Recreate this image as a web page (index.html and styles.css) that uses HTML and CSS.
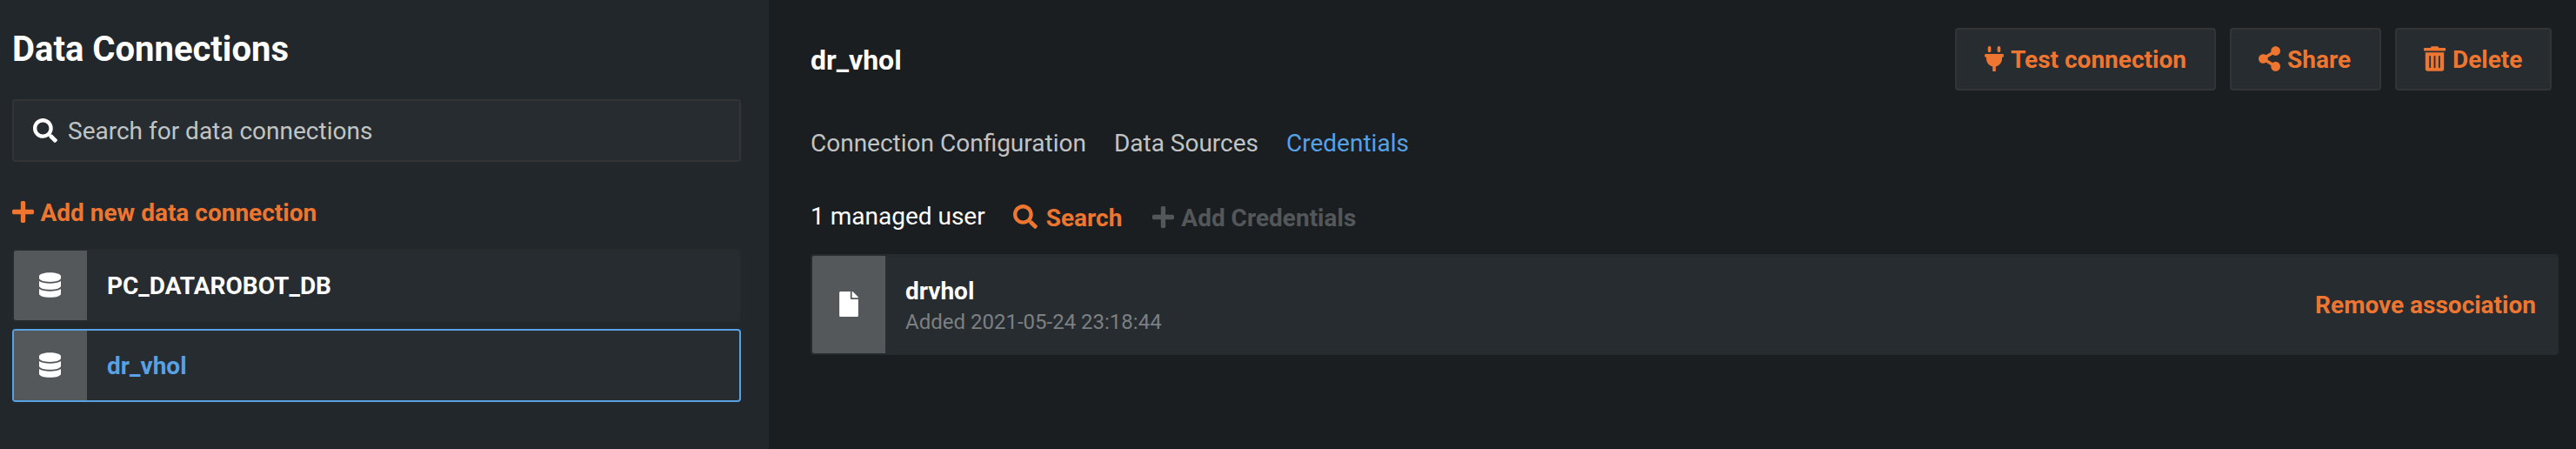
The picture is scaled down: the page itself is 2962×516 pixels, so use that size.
FILE: index.html
```html
<!DOCTYPE html>
<html lang="en">
<head>
<meta charset="utf-8">
<title>Data Connections</title>
<link rel="stylesheet" href="styles.css">
</head>
<body>
<svg class="sprite" aria-hidden="true">
  <symbol id="search" viewBox="0 0 512 512"><path d="M505 442.700 405.300 343c-4.500-4.500-10.600-7-17-7H372c27.600-35.300 44-79.700 44-128C416 93.100 322.900 0 208 0S0 93.100 0 208s93.100 208 208 208c48.300 0 92.700-16.400 128-44v16.300c0 6.400 2.500 12.500 7 17l99.700 99.700c9.400 9.400 24.600 9.400 33.900 0l28.300-28.300c9.400-9.400 9.400-24.600.1-34zM208 336c-70.700 0-128-57.200-128-128 0-70.700 57.200-128 128-128 70.700 0 128 57.200 128 128 0 70.700-57.200 128-128 128z"/></symbol>
  <symbol id="plus" viewBox="0 0 448 448"><path d="M416 176H272V32c0-17.700-14.300-32-32-32h-32c-17.700 0-32 14.300-32 32v144H32c-17.700 0-32 14.300-32 32v32c0 17.700 14.300 32 32 32h144v144c0 17.700 14.300 32 32 32h32c17.700 0 32-14.300 32-32V272h144c17.700 0 32-14.300 32-32v-32c0-17.700-14.300-32-32-32z"/></symbol>
  <symbol id="database" viewBox="0 0 448 512"><path d="M448 73.100v45.800C448 159.100 347.700 192 224 192S0 159.100 0 118.900V73.100C0 32.900 100.300 0 224 0s224 32.900 224 73.100zM448 176v102.900C448 319.100 347.700 352 224 352S0 319.100 0 278.900V176c48.100 33.100 136.200 48.600 224 48.600S399.900 209.100 448 176zm0 160v102.900C448 479.100 347.700 512 224 512S0 479.100 0 438.900V336c48.100 33.100 136.200 48.600 224 48.600S399.900 369.100 448 336z"/></symbol>
  <symbol id="file" viewBox="0 0 384 512"><path d="M224 136V0H24C10.700 0 0 10.700 0 24v464c0 13.300 10.700 24 24 24h336c13.300 0 24-10.700 24-24V160H248c-13.200 0-24-10.800-24-24zm160-14.100v6.100H256V0h6.100c6.400 0 12.500 2.500 17 7l97.900 98c4.500 4.500 7 10.600 7 16.900z"/></symbol>
  <symbol id="plug" viewBox="0 0 384 512"><path d="M320 32a32 32 0 0 0-64 0v64a32 32 0 0 0 64 0zM368 160H16c-8.800 0-16 7.200-16 16v32c0 8.800 7.200 16 16 16h16v32c0 77.400 55 142 128 156.800V512h64v-99.200C297 398 352 333.400 352 256v-32h16c8.800 0 16-7.200 16-16v-32c0-8.800-7.200-16-16-16zM128 32a32 32 0 0 0-64 0v64a32 32 0 0 0 64 0z"/></symbol>
  <symbol id="share" viewBox="0 0 448 512"><path d="M352 320c-22.600 0-43.400 7.800-59.800 20.900l-102.500-64.100a96.600 96.600 0 0 0 0-41.700l102.500-64.100C308.600 184.200 329.400 192 352 192c53 0 96-43 96-96S405 0 352 0s-96 43-96 96c0 7.200.8 14.100 2.300 20.900l-102.500 64.100C139.400 167.800 118.600 160 96 160c-53 0-96 43-96 96s43 96 96 96c22.600 0 43.400-7.800 59.800-20.900l102.500 64.100A96.300 96.300 0 0 0 256 416c0 53 43 96 96 96s96-43 96-96-43-96-96-96z"/></symbol>
  <symbol id="trash" viewBox="0 0 448 512"><path fill-rule="evenodd" d="M432 32H312l-9.400-18.700A24 24 0 0 0 281.100 0H166.800a23.700 23.700 0 0 0-21.400 13.300L136 32H16A16 16 0 0 0 0 48v32a16 16 0 0 0 16 16h416a16 16 0 0 0 16-16V48a16 16 0 0 0-16-16zM32 128v336a48 48 0 0 0 48 48h288a48 48 0 0 0 48-48V128zm80 80a16 16 0 0 1 32 0v224a16 16 0 0 1-32 0zm96 0a16 16 0 0 1 32 0v224a16 16 0 0 1-32 0zm96 0a16 16 0 0 1 32 0v224a16 16 0 0 1-32 0z"/></symbol>
</svg>
<div class="app">
  <aside class="sidebar">
    <h1 class="sidebar-title">Data Connections</h1>
    <div class="search-box">
      <svg class="icon icon-search"><use href="#search"/></svg>
      <span>Search for data connections</span>
    </div>
    <a class="action add-connection"><svg class="icon icon-plus"><use href="#plus"/></svg><span>Add new data connection</span></a>
    <div class="connections">
      <div class="connection">
        <div class="tile"><svg class="icon icon-database"><use href="#database"/></svg></div>
        <span class="connection-name">PC_DATAROBOT_DB</span>
      </div>
      <div class="connection selected">
        <div class="tile"><svg class="icon icon-database"><use href="#database"/></svg></div>
        <span class="connection-name">dr_vhol</span>
      </div>
    </div>
  </aside>
  <main class="detail">
    <header class="detail-header">
      <h2 class="detail-title">dr_vhol</h2>
      <div class="buttons">
        <button class="button test"><svg class="icon icon-plug"><use href="#plug"/></svg><span>Test connection</span></button>
        <button class="button share"><svg class="icon icon-share"><use href="#share"/></svg><span>Share</span></button>
        <button class="button delete"><svg class="icon icon-trash"><use href="#trash"/></svg><span>Delete</span></button>
      </div>
    </header>
    <nav class="tabs">
      <a class="tab">Connection Configuration</a>
      <a class="tab">Data Sources</a>
      <a class="tab active">Credentials</a>
    </nav>
    <div class="toolbar">
      <span class="user-count">1 managed user</span>
      <a class="action toolbar-search"><svg class="icon icon-search"><use href="#search"/></svg><span>Search</span></a>
      <a class="action disabled"><svg class="icon icon-plus"><use href="#plus"/></svg><span>Add Credentials</span></a>
    </div>
    <div class="credential">
      <div class="tile"><svg class="icon icon-file"><use href="#file"/></svg></div>
      <div class="credential-info">
        <div class="credential-name">drvhol</div>
        <div class="credential-date">Added 2021-05-24 23:18:44</div>
      </div>
      <a class="action remove">Remove association</a>
    </div>
  </main>
</div>
</body>
</html>
```

FILE: styles.css
```css
* { box-sizing: border-box; }

body {
  margin: 0;
  background: #1a1e20;
  color: #fff;
  font: 28px/32px Roboto, sans-serif;
}

.sprite { display: none; }
.icon { display: block; flex: none; fill: currentColor; }
.icon-search { width: 28px; height: 28px; }
.icon-plus { width: 25px; height: 25px; margin-bottom: 1px; }
.icon-database { width: 25px; height: 29px; margin: 0 1px 1px 0; }
.icon-file { width: 22px; height: 29px; margin-bottom: 1px; }
.icon-plug { width: 22px; height: 29px; margin-bottom: 1px; }
.icon-share { width: 25px; height: 29px; margin-bottom: 1px; }
.icon-trash { width: 25px; height: 29px; margin-bottom: 1px; }

.app { display: flex; height: 516px; overflow: hidden; }

.sidebar {
  flex: none;
  width: 884px;
  padding: 33px 32px 0 14px;
  background: #22272b;
}

.sidebar-title { margin: 0; font-size: 40px; line-height: 48px; font-weight: 700; }

.search-box {
  display: flex;
  align-items: center;
  height: 72px;
  margin-top: 33px;
  padding: 0 22px;
  border: 2px solid #323436;
  border-radius: 4px;
  background: #272c30;
}
.search-box span { margin-left: 12px; padding-top: 2px; color: #c1c4c5; }

.action {
  display: flex;
  align-items: center;
  color: #ee7630;
  font-weight: 700;
}
.action.disabled { color: #53575a; }
.action span { margin-left: 8px; padding-top: 2px; }

.add-connection { margin-top: 41px; }
.add-connection span { margin-left: 7.5px; }

.connections { display: grid; gap: 8px; margin-top: 25px; }
.connection {
  display: flex;
  height: 84px;
  align-items: center;
  border: 2px solid #262b2e;
  border-radius: 4px;
  background: #272c30;
}
.connection.selected { border-color: #57a1e4; color: #57a1e4; }
.connection-name { margin-left: 23px; padding-top: 2px; font-weight: 700; }

.tile {
  display: flex;
  flex: none;
  align-self: stretch;
  align-items: center;
  justify-content: center;
  width: 84px;
  border-radius: 2px 0 0 2px;
  background: #54585b;
  color: #fff;
}

.detail { flex: 1; padding: 32px 20px 0 48px; }
.detail-header { display: flex; align-items: center; justify-content: space-between; padding-right: 8px; }
.detail-title { margin: 0; padding-top: 2px; font-size: 32px; line-height: 40px; font-weight: 700; }

.buttons { display: flex; gap: 16px; }
.button {
  display: flex;
  align-items: center;
  height: 72px;
  padding: 0 0 0 31px;
  border: 2px solid #323436;
  border-radius: 4px;
  background: #272c30;
  color: #ee7630;
  font: 700 28px/32px Roboto, sans-serif;
}
.button span { margin-left: 8px; padding-top: 2px; }
.test { width: 300px; padding-left: 32px; }
.share { width: 174px; }
.delete { width: 180px; }

.tabs { display: flex; gap: 32px; margin-top: 45px; color: #c1c4c5; }
.tab.active { color: #57a1e4; }

.toolbar { display: flex; margin-top: 52px; }
.toolbar .action { margin-left: 32px; }
.toolbar .disabled { margin-left: 35px; }
.toolbar-search .icon { margin-bottom: 2px; }
.toolbar-search span { margin-left: 10px; }

.credential {
  display: flex;
  align-items: center;
  height: 116px;
  margin-top: 25px;
  padding-right: 24px;
  border: 2px solid #262b2e;
  border-radius: 4px;
  background: #272c30;
}
.credential-info { flex: 1; margin-left: 23px; padding-top: 3px; }
.credential-name { margin-bottom: 1px; font-weight: 700; line-height: 36px; }
.credential-date { color: #7c8083; font-size: 24px; line-height: 32px; }
.remove { padding-top: 2px; }
```
